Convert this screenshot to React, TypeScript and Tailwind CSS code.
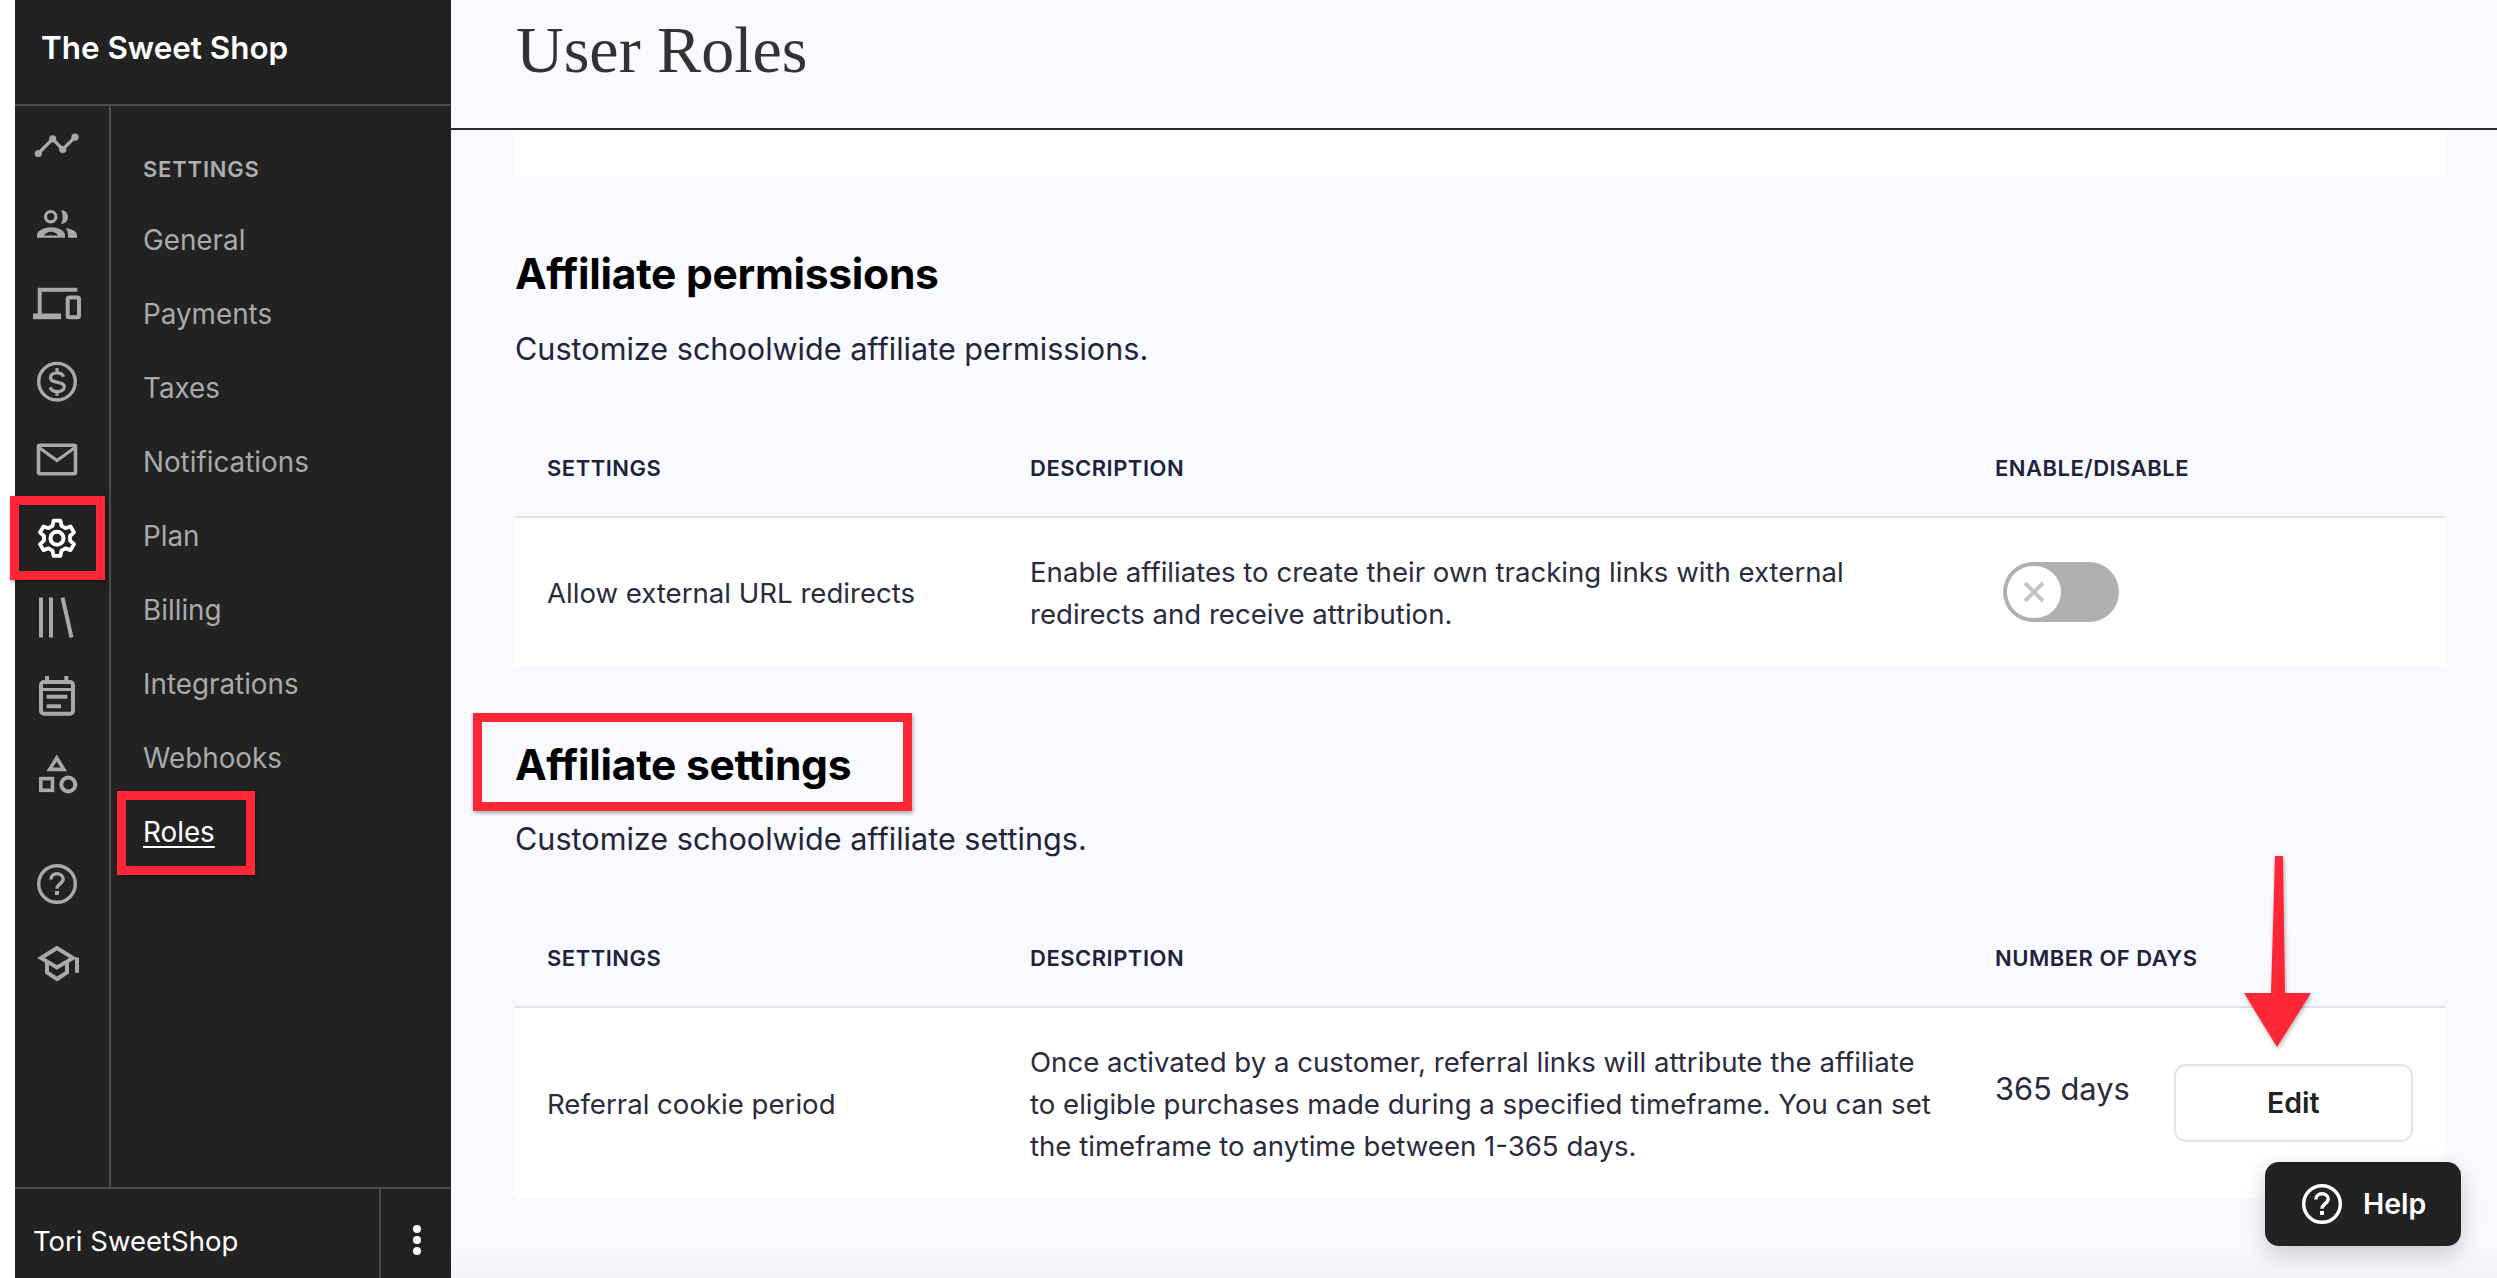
import React from "react";

const NAV = ["General","Payments","Taxes","Notifications","Plan","Billing","Integrations","Webhooks"];

function Ico({ children }: { children: React.ReactNode }) {
  return <svg width="48" height="48" viewBox="0 0 48 48" fill="none" stroke="currentColor" strokeWidth="3" overflow="visible">{children}</svg>;
}

const Trend = () => <Ico><path d="M5.3 32.5 19.7 17.8 29.7 28.5 42 16.2" strokeWidth="3.3"/><g fill="currentColor" stroke="none"><circle cx="5.3" cy="32.5" r="3.6"/><circle cx="19.7" cy="17.8" r="3.6"/><circle cx="29.7" cy="28.5" r="3.6"/><circle cx="42" cy="16.2" r="3.6"/></g></Ico>;
const People = () => <Ico>
  <circle cx="17.7" cy="16.7" r="5.2" strokeWidth="3.2"/>
  <path d="M28 10a7 7 0 0 1 0 14c2.2-4 2.2-10 0-14Z" fill="currentColor" stroke="none"/>
  <path d="M4 37.7v-2.5c0-5 8-7.9 14-7.9s14 2.9 14 7.9v2.5Z" fill="currentColor" stroke="none"/>
  <path d="M11 35.5c1.5-2.500 4-3.700 7-3.700s5.500 1.200 7 3.700Z" fill="#222222" stroke="none"/>
  <path d="M32.7 28c6 1 11.3 3.5 11.3 7v2.7h-9v-2.700c0-3-.8-5-2.300-7Z" fill="currentColor" stroke="none"/>
</Ico>;
const Devices = () => <Ico>
  <path d="M44.3 11.800H6.700V36" strokeWidth="4"/>
  <path d="M0 35.500h28v5.700H0Z" fill="currentColor" stroke="none"/>
  <rect x="34.700" y="19.500" width="11.300" height="19.700" rx="1.500" strokeWidth="4"/>
</Ico>;
const Dollar = () => <Ico>
  <circle cx="24" cy="24.700" r="18.300" strokeWidth="3.400"/>
  <path d="M30.500 19.800c-.7-2.500-3.300-4-6.500-4-3.700 0-6.500 1.800-6.500 4.800 0 6.700 13.800 3 13.800 9.200 0 3-3.100 4.800-7.300 4.800-3.500 0-6-1.600-6.800-4.300M24 11v4.500M24 34v4.700" strokeWidth="3.300"/>
</Ico>;
const Mail = () => <Ico>
  <rect x="5.500" y="10.300" width="37" height="28.500" rx="1.500" strokeWidth="3.600"/>
  <path d="M6 12.500 24 25.500 42 12.500" strokeWidth="3.200"/>
</Ico>;

function gearPath(): string {
  const R = 18, r = 13.2, pts: string[] = [];
  for (let k = 0; k < 6; k++) {
    const a = -90 + k * 60;
    for (const [rad, off] of [[r, -20], [R, -11], [R, 11], [r, 20]] as const) {
      const t = ((a + off) * Math.PI) / 180;
      pts.push(`${(rad * Math.cos(t)).toFixed(2)} ${(rad * Math.sin(t)).toFixed(2)}`);
    }
  }
  return "M" + pts.join("L") + "Z";
}
const Gear = () => <Ico><g transform="translate(24 24.300)">
  <circle r="6.500" strokeWidth="4"/>
  <path d={gearPath()} strokeWidth="3.800" strokeLinejoin="round"/>
</g></Ico>;
const Library = () => <Ico><path d="M8 5.500v40M18 5.500v40M29.500 5.500 38.500 45.500" strokeWidth="4"/></Ico>;
const Calendar = () => <Ico>
  <rect x="8" y="11" width="32" height="31.700" rx="3" strokeWidth="4"/>
  <path d="M14 5v7M33.300 5v7" strokeWidth="4"/>
  <path d="M8 18.500h32" strokeWidth="3"/>
  <path d="M13.700 25.800h20.600M13.700 35.300h14.300" strokeWidth="4"/>
</Ico>;
const Shapes = () => <Ico>
  <path d="M23.700 9 30.800 20.400H16.700Z" strokeWidth="3.600"/>
  <rect x="7.800" y="29.600" width="11.700" height="11.700" strokeWidth="3.600"/>
  <circle cx="35.300" cy="35.500" r="7" strokeWidth="4"/>
</Ico>;
const HelpI = ({ size = 48 }: { size?: number }) => <svg width={size} height={size} viewBox="0 0 48 48" fill="none" stroke="currentColor">
  <circle cx="24" cy="24" r="18.300" strokeWidth="3.400"/>
  <path d="M17.800 19.500c0-3.600 2.800-5.700 6.200-5.700s6.200 2.100 6.200 5.200c0 4.700-6.200 4.500-6.200 9.800" strokeWidth="3.400"/>
  <rect x="22" y="31" width="4" height="4" fill="currentColor" stroke="none"/>
</svg>;
const School = () => <Ico>
  <path d="M24 10 8 20 24 29.500 40 20Z" strokeWidth="4"/>
  <path d="M14 24v10.500L24 41l10-6.500V24" strokeWidth="4"/>
  <path d="M44 19.500v15.300" strokeWidth="4"/>
</Ico>;

function IconItem({ children, active }: { children: React.ReactNode; active?: boolean }) {
  return <div className={`flex h-[78.5px] items-center justify-center ${active ? "text-white" : "text-[#a9a9a9]"}`}>{children}</div>;
}

function TableHead({ third }: { third: string }) {
  return (
    <div className="grid h-[96px] grid-cols-[483px_965px_1fr] items-center border-b-2 border-[#e2e3ea] pb-[2px] pl-[32px] text-[22px] font-semibold tracking-[0.5px] text-[#20213a]">
      <div>SETTINGS</div>
      <div>DESCRIPTION</div>
      <div>{third}</div>
    </div>
  );
}

const RedBox = ({ className }: { className: string }) => (
  <div className={`absolute border-[9px] border-[#ff2635] shadow-[1px_2px_4px_rgba(0,0,0,0.35)] ${className}`} />
);

export default function App() {
  return (
    <div className="relative flex h-[1278px] w-[2497px] overflow-hidden bg-white font-['Inter',sans-serif]">
      {/* Sidebar */}
      <aside className="ml-[15px] flex w-[436px] shrink-0 flex-col bg-[#222222]">
        <div className="flex h-[106px] shrink-0 items-center border-b-2 border-[#4c4c4c] pb-[6px] pl-[26px] text-[31.4px] font-semibold text-white">The Sweet Shop</div>
        <div className="flex min-h-0 flex-1">
          <div className="w-[96px] shrink-0 border-r-2 border-[#4c4c4c] pr-[10px]">
            <IconItem><Trend /></IconItem>
            <IconItem><People /></IconItem>
            <IconItem><Devices /></IconItem>
            <IconItem><Dollar /></IconItem>
            <IconItem><Mail /></IconItem>
            <IconItem active><Gear /></IconItem>
            <IconItem><Library /></IconItem>
            <IconItem><Calendar /></IconItem>
            <IconItem><Shapes /></IconItem>
            <div className="h-[32px]" />
            <IconItem><HelpI /></IconItem>
            <IconItem><School /></IconItem>
          </div>
          <nav className="flex-1 pl-[32px] pt-[43px]">
            <div className="mb-[15px] flex h-[40px] items-center text-[22px] font-semibold tracking-[0.8px] text-[#adadad]">SETTINGS</div>
            {NAV.map((n) => (
              <div key={n} className="flex h-[74px] items-center text-[27.8px] text-[#a9a9a9]">{n}</div>
            ))}
            <div className="flex h-[74px] items-center text-[27.8px] text-white underline underline-offset-[4px]">Roles</div>
          </nav>
        </div>
        <div className="flex h-[91px] shrink-0 border-t-2 border-[#4c4c4c]">
          <div className="flex flex-1 items-center pl-[18px] pt-[16px] text-[27.5px] text-white">Tori SweetShop</div>
          <div className="flex w-[72px] items-center justify-center border-l-2 border-[#4c4c4c] pl-[2px] pt-[12px]">
            <div className="flex flex-col gap-[3px]">
              <span className="h-[8px] w-[8px] rounded-full bg-white" />
              <span className="h-[8px] w-[8px] rounded-full bg-white" />
              <span className="h-[8px] w-[8px] rounded-full bg-white" />
            </div>
          </div>
        </div>
      </aside>

      {/* Main */}
      <main className="flex min-w-0 flex-1 flex-col bg-[#f9faff]">
        <header className="flex h-[130px] shrink-0 items-start border-b-2 border-[#2b2b2b] pl-[65px] pt-[10px] font-['Liberation_Serif',serif] text-[66px] leading-[80px] text-[#333333]">User Roles</header>
        <div className="flex-1 pl-[64px] pr-[52px]">
          <div className="h-[46px] bg-white" />
          <h2 className="mt-[66px] text-[42.6px] font-bold leading-[64px] tracking-[-0.3px] text-black">Affiliate permissions</h2>
          <p className="mt-[23px] text-[30.6px] leading-[40px] text-[#23243a]">Customize schoolwide affiliate permissions.</p>
          <div className="mt-[53px]">
            <TableHead third="ENABLE/DISABLE" />
            <div className="grid h-[148px] grid-cols-[483px_965px_1fr] items-center bg-white pl-[32px] pt-[2px] text-[27.6px] leading-[42px] text-[#2a2b3d]">
              <div>Allow external URL redirects</div>
              <div>Enable affiliates to create their own tracking links with external<br />redirects and receive attribution.</div>
              <div className="pb-[2px] pl-[8px]">
                <div className="flex h-[60px] w-[116px] items-center rounded-full bg-[#b0b0b0] pl-[4px]">
                  <div className="flex h-[52px] w-[54px] items-center justify-center rounded-full bg-white">
                    <svg width="24" height="24" viewBox="0 0 24 24" stroke="#c4c4c4" strokeWidth="4"><path d="M3 3 21 21M21 3 3 21" /></svg>
                  </div>
                </div>
              </div>
            </div>
          </div>
          <h2 className="mt-[67px] text-[42.6px] font-bold leading-[64px] tracking-[-0.3px] text-black">Affiliate settings</h2>
          <p className="mt-[22px] text-[30.6px] leading-[40px] text-[#23243a]">Customize schoolwide affiliate settings.</p>
          <div className="mt-[53px]">
            <TableHead third="NUMBER OF DAYS" />
            <div className="grid h-[190px] grid-cols-[483px_965px_1fr] items-center bg-white pl-[32px] pt-[2px] text-[27.6px] leading-[42px] text-[#2a2b3d]">
              <div>Referral cookie period</div>
              <div>Once activated by a customer, referral links will attribute the affiliate<br />to eligible purchases made during a specified timeframe. You can set<br />the timeframe to anytime between 1-365 days.</div>
              <div className="flex items-center gap-[44px]">
                <span className="pb-[30px] text-[30.8px] text-[#2a2b3d]">365 days</span>
                <button className="mt-[-2px] h-[78px] w-[239px] rounded-[12px] border-2 border-[#e4e4e4] bg-white text-[28.5px] font-semibold text-[#222222]">Edit</button>
              </div>
            </div>
          </div>
        </div>
      </main>

      {/* Soft shade along the lower edge of the content */}
      <div className="pointer-events-none absolute bottom-0 left-[451px] right-0 h-[36px] bg-gradient-to-b from-transparent to-[#f2f3f6]" />

      {/* Floating help button */}
      <div className="absolute left-[2265px] top-[1162px] flex h-[84px] w-[196px] items-center gap-[17px] rounded-[14px] bg-[#222222] pl-[33px] text-[28.5px] font-semibold text-white shadow-[0_8px_24px_rgba(0,0,0,0.2)]">
        <HelpI />
        <span>Help</span>
      </div>

      {/* Annotations */}
      <RedBox className="left-[10px] top-[496px] h-[84px] w-[95px]" />
      <RedBox className="left-[117px] top-[791px] h-[84px] w-[138px]" />
      <RedBox className="left-[473px] top-[713px] h-[98px] w-[439px]" />
      <svg className="absolute left-[2234px] top-[850px]" width="90" height="205" viewBox="0 0 90 205">
        <path d="M41 6H49L51 143H77L43 197 10 143H37Z" fill="#ff2635" style={{ filter: "drop-shadow(1px 2px 2px rgba(0,0,0,.3))" }} />
      </svg>
    </div>
  );
}
